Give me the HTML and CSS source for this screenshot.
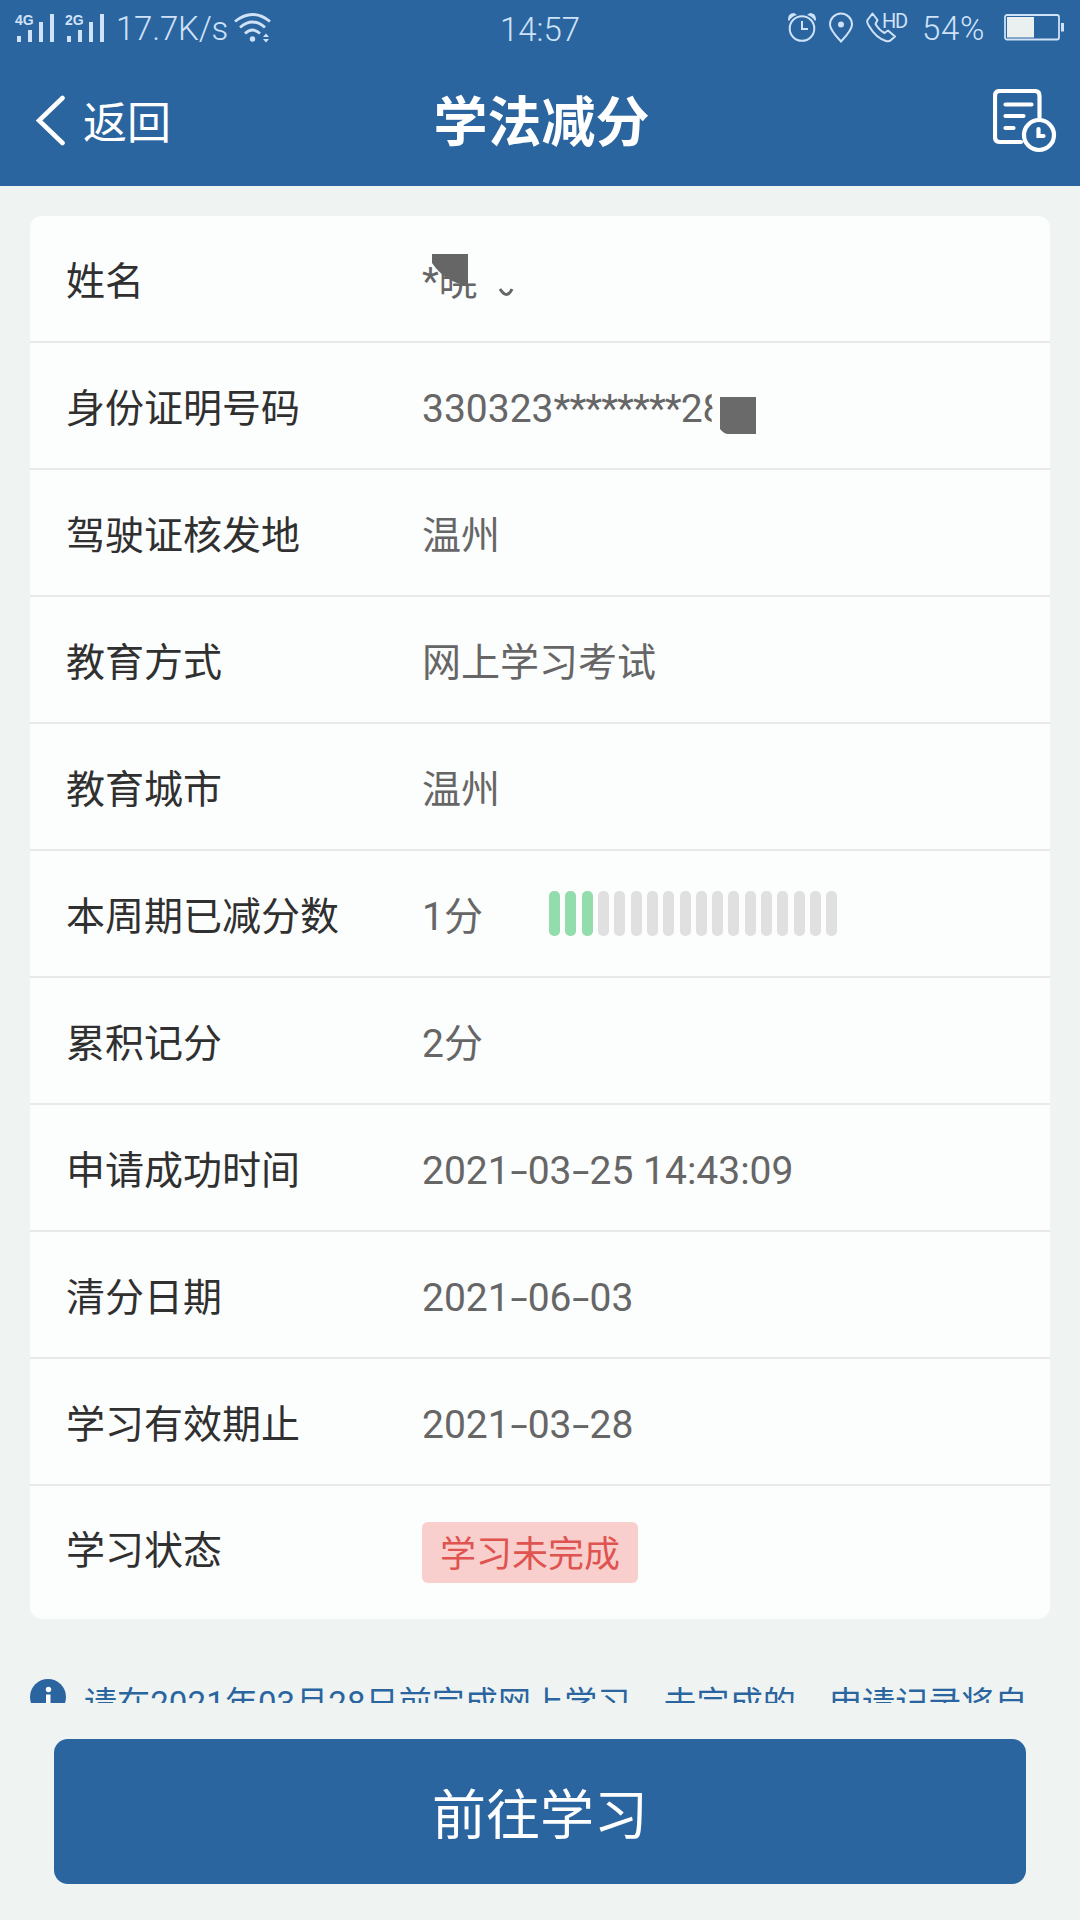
FILE: index.html
```html
<!DOCTYPE html>
<html lang="zh-CN">
<head>
    <meta charset="utf-8">
    <meta name="viewport" content="width=device-width, initial-scale=1.0">
    <title>学法减分</title>
    <link rel="stylesheet" href="styles.css">
</head>
<body>
    <header class="header">
        <div class="status_bar">
            <div class="status_left">
                <svg class="signal" width="40" height="32" viewBox="0 -2 40 32">
                    <text x="-1" y="11" class="net">4G</text>
                    <path d="M1 22h4v6H1zM12 16h4v12h-4zM23 8h4v20h-4zM34 0h4v28h-4z"/>
                </svg>
                <svg class="signal" width="40" height="32" viewBox="0 -2 40 32">
                    <text x="-1" y="11" class="net">2G</text>
                    <path d="M1 22h4v6H1zM12 16h4v12h-4zM23 8h4v20h-4zM34 0h4v28h-4z"/>
                </svg>
                <span class="speed">17.7K/s</span>
                <svg class="wifi" width="38" height="30" viewBox="0 0 38 30">
                    <g fill="none" stroke="#cfe2f8" stroke-width="2.8">
                        <path d="M1 8.500Q18.500 -5.500 36 8.500"/>
                        <path d="M6 14.500Q18.500 3.500 31 14.500"/>
                        <path d="M11 20.500Q18.500 13.500 26 20.500"/>
                    </g>
                    <circle cx="18.500" cy="26" r="2.700"/>
                    <path d="M29 24l3-3.500 3 3.500zM29 26h6l-3 3.500z"/>
                </svg>
            </div>
            <span class="clock">14:57</span>
            <div class="status_right">
                <svg width="28" height="30" viewBox="0 0 28 30">
                    <circle cx="14" cy="15.500" r="12.300" fill="none" stroke="#cfe2f8" stroke-width="2"/>
                    <path d="M14 8v8h6" fill="none" stroke="#cfe2f8" stroke-width="2"/>
                    <path d="M0 7Q0 0 6 0L9 2Q4 3 1 8zM28 7Q28 0 22 0L19 2Q24 3 27 8z"/>
                </svg>
                <svg width="26" height="32" viewBox="0 0 26 32">
                    <path d="M13 29.500C8 24 2 18 2 12.500a11 11 0 0 1 22 0C24 18 18 24 13 29.500z" fill="none" stroke="#cfe2f8" stroke-width="2"/>
                    <circle cx="13" cy="12.500" r="3"/>
                </svg>
                <svg class="phone" width="43" height="32" viewBox="0 0 43 32">
                    <path d="M6.500 1.500L1.500 8Q0.500 10 3 14Q10 26 20 29Q23 30 25 28L29 24.500L22 18.500L18.500 21Q13 18 9.500 12L11.500 8z" fill="none" stroke="#cfe2f8" stroke-width="2" stroke-linejoin="round"/>
                    <text x="16" y="15.500" class="hd" textLength="26">HD</text>
                </svg>
                <span class="percent">54%</span>
                <svg width="60" height="28" viewBox="0 0 60 28">
                    <rect x="1" y="1" width="54" height="24.500" rx="2" fill="none" stroke="#cfe2f8" stroke-width="1.800"/>
                    <rect x="3" y="3" width="27" height="20.500" fill="#eaf0f0"/>
                    <rect x="57" y="9" width="3" height="8.500"/>
                </svg>
            </div>
        </div>
        <div class="nav_bar">
            <a class="back">
                <svg width="30" height="52" viewBox="0 0 30 52">
                    <path d="M26.500 3L3 25.500L26.500 48" fill="none" stroke="#fff" stroke-width="4.600" stroke-linecap="round"/>
                </svg>
                <span>返回</span>
            </a>
            <h1>学法减分</h1>
            <svg class="record" width="64" height="64" viewBox="0 0 64 64" fill="none" stroke="#fff" stroke-width="4.200" stroke-linecap="round">
                <path d="M46.500 28V7q0-5-5-5H7Q2 2 2 7v41q0 5 5 5h21"/>
                <path d="M12.500 15.500h26M12.500 27h18M12.500 39h8"/>
                <circle cx="46" cy="46" r="15"/>
                <path d="M45.500 40v7h5"/>
            </svg>
        </div>
    </header>

    <main class="content">
        <ul class="card">
            <li class="row">
                <span class="label">姓名</span>
                <span class="value name">*晓
                    <svg class="name_mask" width="110" height="50" viewBox="0 0 110 50">
                        <path d="M14 0H110V50H64V35H46V6H14z" fill="#fcfdfd"/>
                        <path d="M10 6H46V38Q23 34 10 15z" fill="#666"/>
                        <path d="M78 41Q85 52 90 41" fill="none" stroke="#666" stroke-width="3"/>
                    </svg>
                </span>
            </li>
            <li class="row">
                <span class="label">身份证明号码</span>
                <span class="value idno">330323<span class="stars">********</span>28
                    <svg class="id_mask" width="48" height="52" viewBox="0 0 48 52">
                        <path d="M4 0H48V52H8Q-3 38 2 25Q-2 12 4 0z" fill="#fcfdfd"/>
                        <path d="M9 12H45V49H17Q13 49 9 44z" fill="#6a6a6a"/>
                    </svg>
                </span>
            </li>
            <li class="row">
                <span class="label">驾驶证核发地</span>
                <span class="value">温州</span>
            </li>
            <li class="row">
                <span class="label">教育方式</span>
                <span class="value">网上学习考试</span>
            </li>
            <li class="row">
                <span class="label">教育城市</span>
                <span class="value">温州</span>
            </li>
            <li class="row">
                <span class="label">本周期已减分数</span>
                <span class="value score">1分</span>
                <div class="bars">
                    <i class="on"></i><i class="on"></i><i class="on"></i><i></i><i></i><i></i>
                    <i></i><i></i><i></i><i></i><i></i><i></i>
                    <i></i><i></i><i></i><i></i><i></i><i></i>
                </div>
            </li>
            <li class="row">
                <span class="label">累积记分</span>
                <span class="value">2分</span>
            </li>
            <li class="row">
                <span class="label">申请成功时间</span>
                <span class="value">2021<b>-</b>03<b>-</b>25 14:43:09</span>
            </li>
            <li class="row">
                <span class="label">清分日期</span>
                <span class="value">2021<b>-</b>06<b>-</b>03</span>
            </li>
            <li class="row">
                <span class="label">学习有效期止</span>
                <span class="value">2021<b>-</b>03<b>-</b>28</span>
            </li>
            <li class="row last">
                <span class="label">学习状态</span>
                <span class="tag">学习未完成</span>
            </li>
        </ul>

        <div class="notice">
            <svg width="36" height="36" viewBox="0 0 36 36">
                <circle cx="18" cy="18" r="18" fill="#2a659f"/>
                <circle cx="18.500" cy="10.500" r="2.700" fill="#fff"/>
                <path d="M16 15.500h4.500V29H16z" fill="#fff"/>
            </svg>
            <p>请在2021年03月28日前完成网上学习，未完成的，申请记录将自</p>
        </div>
    </main>

    <footer class="footer">
        <button type="button">前往学习</button>
    </footer>
</body>
</html>
```
FILE: styles.css
```css
* {
    box-sizing: border-box;
}
body {
    margin: 0;
    height: 1920px;
    display: flex;
    flex-direction: column;
    overflow: hidden;
    background-color: #eff4f3;
    font-family: Roboto, "Noto Sans CJK SC", sans-serif;
}
svg {
    display: block;
    flex: none;
}
.header {
    height: 186px;
    flex: none;
    background-color: #2a659f;
    color: #fff;
}
.status_bar {
    height: 56px;
    padding: 0 16px;
    display: grid;
    grid-template-columns: 1fr auto 1fr;
    align-items: center;
    color: #cfe2f8;
    fill: #cfe2f8;
    font-size: 33px;
    font-weight: 300;
}
.status_left,
.status_right {
    display: flex;
    align-items: center;
}
.status_right {
    justify-content: flex-end;
}
.clock {
    padding-top: 2px;
}
.signal {
    margin-right: 10px;
    overflow: visible;
}
.net {
    font: bold 14px "Liberation Sans", sans-serif;
}
.hd {
    font-size: 20px;
    font-weight: 400;
}
.speed {
    width: 116px;
    padding-top: 1px;
    letter-spacing: -0.2px;
}
.wifi {
    margin-left: 2px;
}
.status_right svg + svg {
    margin-left: 12px;
}
.phone {
    overflow: visible;
}
.percent {
    width: 67px;
    margin: 0 15px 0 13px;
    letter-spacing: 0.7px;
}
.nav_bar {
    height: 130px;
    padding: 0 23px 0 36px;
    display: grid;
    grid-template-columns: 1fr auto 1fr;
    align-items: center;
}
.back {
    display: flex;
    align-items: center;
    gap: 17px;
    font-size: 44px;
    line-height: 52px;
}
.back span {
    padding-top: 5px;
}
.nav_bar h1 {
    margin: 0;
    padding: 6px 10px 0 0;
    font-size: 54px;
    font-weight: 700;
    line-height: 60px;
}
.record {
    justify-self: end;
}
.content {
    height: 1517px;
    flex: none;
    padding: 30px 30px 0;
    overflow: hidden;
}
.card {
    margin: 0;
    padding: 0;
    list-style: none;
    background-color: #fcfdfd;
    border-radius: 12px;
}
.row {
    height: 127px;
    padding: 7px 0 0 36px;
    display: flex;
    align-items: center;
    border-bottom: 2px solid #e9e9e9;
    font-size: 39px;
    line-height: 56px;
}
.row.last {
    height: 133px;
    padding-top: 0;
    border-bottom: none;
}
.last .label {
    padding-bottom: 3px;
}
.label {
    width: 356px;
    color: #303030;
}
.value {
    position: relative;
    color: #666;
    white-space: nowrap;
}
.value b {
    display: inline-block;
    width: 18px;
    font-weight: inherit;
    text-align: center;
    transform: scaleX(1.6);
}
.stars {
    letter-spacing: -0.9px;
}
.score {
    width: 127px;
}
.name_mask {
    position: absolute;
    left: 0;
    top: -6px;
}
.id_mask {
    position: absolute;
    left: 289px;
    top: 4px;
}
.bars {
    display: flex;
    gap: 5.320px;
}
.bars i {
    width: 11px;
    height: 45px;
    margin-bottom: 8px;
    border-radius: 5px;
    background-color: #e0e0e0;
}
.bars .on {
    background-color: #93dcab;
}
.tag {
    height: 61px;
    padding: 0 18px;
    border-radius: 6px;
    background-color: #f8cfcc;
    color: #df5350;
    font-size: 36px;
    line-height: 67px;
}
.notice {
    margin-top: 60px;
    display: flex;
    gap: 18px;
    color: #2a659f;
    font-size: 33px;
}
.notice p {
    margin: 0;
    line-height: 50px;
    letter-spacing: 0.1px;
    white-space: nowrap;
}
.footer {
    padding: 36px 54px 0;
}
.footer button {
    width: 100%;
    height: 145px;
    border: none;
    border-radius: 14px;
    background-color: #2a659f;
    color: #fff;
    font-family: inherit;
    font-size: 54px;
}
```
